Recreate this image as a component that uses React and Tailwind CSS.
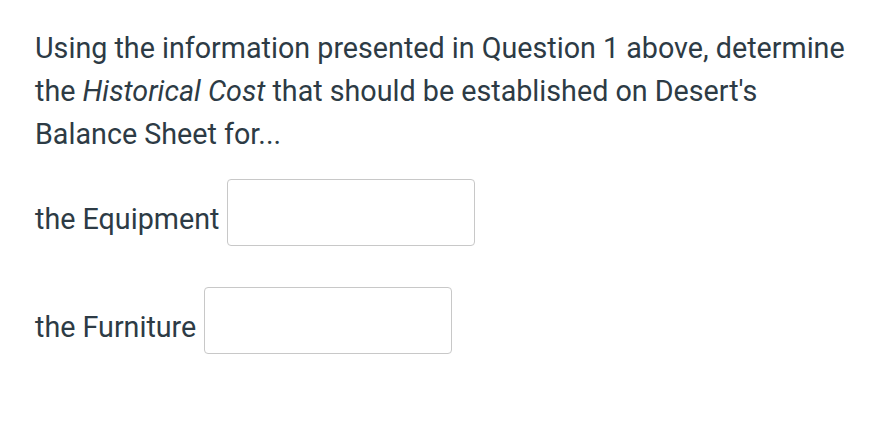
export default function App() {
  return (
    <div className="min-h-screen bg-white px-[35px] pt-[27px] text-[#2d3b45]" style={{ fontFamily: 'Roboto, "Noto Sans", sans-serif' }}>
      <p className="max-w-[816px] text-[28.7px] leading-[43px]">
        Using the information presented in Question 1 above, determine the <em>Historical Cost</em> that should be
        established on Desert's Balance Sheet for...
      </p>
      <div className="mt-[23px] flex flex-col gap-[41px]">
        <div className="flex items-start gap-[8px]">
          <span className="mt-[19px] text-[28.7px] leading-[43px]">the Equipment</span>
          <input type="text" className="h-[67px] w-[248px] rounded-[4px] border border-[#c8c8c8] bg-white px-3" />
        </div>
        <div className="flex items-start gap-[8px]">
          <span className="mt-[19px] text-[28.7px] leading-[43px]">the Furniture</span>
          <input type="text" className="h-[67px] w-[248px] rounded-[4px] border border-[#c8c8c8] bg-white px-3" />
        </div>
      </div>
    </div>
  );
}
